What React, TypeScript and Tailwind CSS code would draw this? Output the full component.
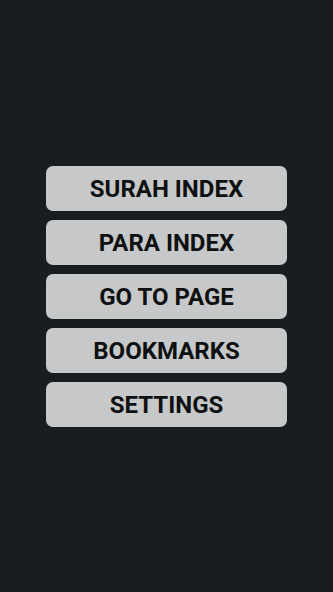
const items = ["SURAH INDEX", "PARA INDEX", "GO TO PAGE", "BOOKMARKS", "SETTINGS"];

export default function App() {
  return (
    <div className="flex h-[592px] w-full flex-col items-center justify-center gap-[9px] bg-[#181e20] font-['Roboto',sans-serif]">
      {items.map((label) => (
        <button
          key={label}
          type="button"
          className="flex h-[45px] w-[241px] items-center justify-center rounded-[7px] bg-[#c6c8c9] pt-[2px] text-[24px] leading-none font-bold text-[#0e1011]"
        >
          {label}
        </button>
      ))}
    </div>
  );
}
